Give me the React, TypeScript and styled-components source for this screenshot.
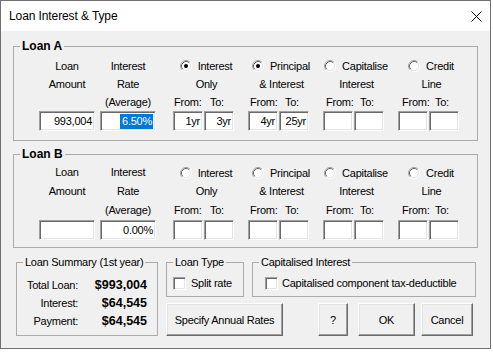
import React from 'react';
import styled, { createGlobalStyle } from 'styled-components';

const GlobalStyle = createGlobalStyle`
  html, body { margin: 0; padding: 0; background: #fff; }
  body {
    font-family: "Liberation Sans", Arial, sans-serif;
    font-size: 11px;
    letter-spacing: -0.25px;
    color: #000;
  }
`;

type TLoan = {
  name: string;
  amount: string;
  rate: string;
  rateSelected?: boolean;
  checked: number[];
  ranges: [string, string][];
  lh: number;
  pt: number;
  pb: number;
};

const TYPES = [
  { top: 'Interest', bottom: 'Only', ml: 17 },
  { top: 'Principal', bottom: '& Interest', ml: 14 },
  { top: 'Capitalise', bottom: 'Interest', ml: 14 },
  { top: 'Credit', bottom: 'Line', ml: 14 },
];

const LOANS: TLoan[] = [
  {
    name: 'Loan A',
    amount: '993,004',
    rate: '6.50%',
    rateSelected: true,
    checked: [0, 1],
    ranges: [['1yr', '3yr'], ['4yr', '25yr'], ['', ''], ['', '']],
    lh: 18,
    pt: 4,
    pb: 9,
  },
  {
    name: 'Loan B',
    amount: '',
    rate: '0.00%',
    checked: [],
    ranges: [['', ''], ['', ''], ['', ''], ['', '']],
    lh: 19,
    pt: 2,
    pb: 7,
  },
];

const Window = styled.div`
  width: 491px;
  height: 349px;
  box-sizing: border-box;
  border: 1px solid #707070;
  background: #f0f0f0;
  display: flex;
  flex-direction: column;
`;

const TitleBar = styled.div`
  height: 30px;
  flex: none;
  background: #fff;
  display: flex;
  align-items: center;
  justify-content: space-between;
  padding: 0 8px;
  font-size: 12px;
  letter-spacing: -0.1px;
`;

const Body = styled.div`
  padding: 8px 0 0 12px;
`;

const Group = styled.fieldset<{ $w: number; $mt?: number }>`
  margin: ${p => p.$mt || 0}px 0 0 0;
  padding: 0;
  min-width: 0;
  width: ${p => p.$w}px;
  box-sizing: border-box;
  border: 1px solid #aaa;
`;

const Legend = styled.legend<{ $bold?: boolean }>`
  padding: 0 2px;
  margin-left: 6px;
  line-height: 14px;
  font-size: ${p => (p.$bold ? 12 : 11)}px;
  font-weight: ${p => (p.$bold ? 700 : 400)};
  letter-spacing: ${p => (p.$bold ? '0' : '-0.25px')};
`;

const LoanRow = styled.div<{ $pt: number; $pb: number }>`
  display: flex;
  padding: ${p => p.$pt}px 0 ${p => p.$pb}px 25px;
`;

const Col = styled.div<{ $w: number; $ml: number }>`
  width: ${p => p.$w}px;
  margin-left: ${p => p.$ml}px;
  display: flex;
  flex-direction: column;
`;

const Line = styled.div<{ $lh: number; $shift?: number }>`
  height: ${p => p.$lh}px;
  line-height: ${p => p.$lh}px;
  text-align: center;
  white-space: nowrap;
  padding-left: ${p => p.$shift || 0}px;
`;

const RadioLine = styled.div<{ $lh: number }>`
  height: ${p => p.$lh}px;
  display: flex;
  align-items: center;
  justify-content: center;
  gap: 6px;
  padding-left: 5px;
  white-space: nowrap;
`;

const FromTo = styled.div<{ $lh: number }>`
  height: ${p => p.$lh}px;
  line-height: ${p => p.$lh}px;
  display: flex;
  gap: 1px;
  white-space: nowrap;
`;

const FromToCell = styled.span<{ $pl: number }>`
  width: 30px;
  padding-left: ${p => p.$pl}px;
  box-sizing: border-box;
`;

const Pair = styled.div`
  display: flex;
  gap: 1px;
`;

const Field = styled.div<{ $w: number }>`
  width: ${p => p.$w}px;
  height: 20px;
  box-sizing: border-box;
  background: #fff;
  border: 1px solid;
  border-color: #a0a0a0 #fff #fff #a0a0a0;
  box-shadow: inset 1px 1px #696969, inset -1px -1px #e3e3e3;
  display: flex;
  align-items: center;
  justify-content: flex-end;
  padding-right: 2px;
  white-space: nowrap;
`;

const Selected = styled.span`
  background: #0078d7;
  color: #fff;
  line-height: 15px;
  padding: 0 1px 0 2px;
`;

const Bottom = styled.div`
  display: flex;
  gap: 8px;
  margin: 7px 0 0 3px;
`;

const SummaryGrid = styled.div`
  display: grid;
  grid-template-columns: 61px 69px;
  grid-auto-rows: 18px;
  align-items: center;
  padding: 7px 0 3px 0;
`;

const SumLabel = styled.span`
  justify-self: end;
`;

const SumValue = styled.span`
  justify-self: end;
  font-weight: 700;
  font-size: 12.5px;
  letter-spacing: 0;
`;

const Right = styled.div`
  display: flex;
  flex-direction: column;
  gap: 6px;
`;

const TopRow = styled.div`
  display: flex;
  gap: 8px;
`;

const CheckRow = styled.label<{ $pl: number; $gap: number }>`
  display: flex;
  align-items: center;
  height: 18px;
  gap: ${p => p.$gap}px;
  padding: 5px 0 4px ${p => p.$pl}px;
`;

const CheckBox = styled.span`
  width: 13px;
  height: 13px;
  box-sizing: border-box;
  background: #fff;
  border: 1px solid;
  border-color: #a0a0a0 #fff #fff #a0a0a0;
  box-shadow: inset 1px 1px #696969, inset -1px -1px #e3e3e3;
  flex: none;
`;

const Buttons = styled.div`
  display: flex;
`;

const Button = styled.button<{ $w: number; $ml?: number }>`
  width: ${p => p.$w}px;
  height: 33px;
  margin-left: ${p => p.$ml || 0}px;
  padding: 0;
  box-sizing: border-box;
  font: inherit;
  letter-spacing: -0.25px;
  color: #000;
  background: #f0f0f0;
  border: 1px solid;
  border-color: #fff #696969 #696969 #fff;
  box-shadow: inset -1px -1px #a0a0a0, inset 1px 1px #e3e3e3;
  white-space: nowrap;
`;

const Radio: React.FC<{ checked?: boolean }> = ({ checked }) => (
  <svg width="12" height="12" viewBox="0 0 12 12" style={{ flex: 'none' }}>
    <circle cx="6" cy="6" r="4.5" fill="#fff" />
    <path d="M2.11 9.89 A5.5 5.5 0 0 1 9.89 2.11" fill="none" stroke="#a0a0a0" />
    <path d="M9.89 2.11 A5.5 5.5 0 0 1 2.11 9.89" fill="none" stroke="#fff" />
    <path d="M2.82 9.18 A4.5 4.5 0 0 1 9.18 2.82" fill="none" stroke="#696969" />
    <path d="M9.18 2.82 A4.5 4.5 0 0 1 2.82 9.18" fill="none" stroke="#e3e3e3" />
    {checked && <circle cx="6" cy="6" r="2" fill="#000" />}
  </svg>
);

const CloseIcon = () => (
  <svg width="11" height="11" viewBox="0 0 11 11">
    <path d="M0.5 0.5 L10.5 10.5 M10.5 0.5 L0.5 10.5" stroke="#000" strokeWidth="1" />
  </svg>
);

const LoanGroup: React.FC<{ loan: TLoan; mt?: number }> = ({ loan, mt }) => {
  const { lh } = loan;
  return (
    <Group $w={465} $mt={mt}>
      <Legend $bold>{loan.name}</Legend>
      <LoanRow $pt={loan.pt} $pb={loan.pb}>
        <Col $w={56} $ml={0}>
          <Line $lh={lh}>Loan</Line>
          <Line $lh={lh}>Amount</Line>
          <Line $lh={lh} />
          <Field $w={56}>{loan.amount}</Field>
        </Col>
        <Col $w={56} $ml={5}>
          <Line $lh={lh}>Interest</Line>
          <Line $lh={lh}>Rate</Line>
          <Line $lh={lh}>(Average)</Line>
          <Field $w={56}>
            {loan.rateSelected ? <Selected>{loan.rate}</Selected> : loan.rate}
          </Field>
        </Col>
        {TYPES.map((t, i) => (
          <Col key={t.top} $w={61} $ml={t.ml}>
            <RadioLine $lh={lh}>
              <Radio checked={loan.checked.includes(i)} />
              <span>{t.top}</span>
            </RadioLine>
            <Line $lh={lh} $shift={6}>{t.bottom}</Line>
            <FromTo $lh={lh}>
              <FromToCell $pl={1 + i}>From:</FromToCell>
              <FromToCell $pl={6}>To:</FromToCell>
            </FromTo>
            <Pair>
              <Field $w={30}>{loan.ranges[i][0]}</Field>
              <Field $w={30}>{loan.ranges[i][1]}</Field>
            </Pair>
          </Col>
        ))}
      </LoanRow>
    </Group>
  );
};

export default function App() {
  return (
    <>
      <GlobalStyle />
      <Window>
        <TitleBar>
          <span>Loan Interest &amp; Type</span>
          <CloseIcon />
        </TitleBar>
        <Body>
          <LoanGroup loan={LOANS[0]} />
          <LoanGroup loan={LOANS[1]} mt={6} />
          <Bottom>
            <Group $w={142}>
              <Legend>Loan Summary (1st year)</Legend>
              <SummaryGrid>
                <SumLabel>Total Loan:</SumLabel>
                <SumValue>$993,004</SumValue>
                <SumLabel>Interest:</SumLabel>
                <SumValue>$64,545</SumValue>
                <SumLabel>Payment:</SumLabel>
                <SumValue>$64,545</SumValue>
              </SummaryGrid>
            </Group>
            <Right>
              <TopRow>
                <Group $w={78}>
                  <Legend>Loan Type</Legend>
                  <CheckRow $pl={6} $gap={5}>
                    <CheckBox />
                    <span>Split rate</span>
                  </CheckRow>
                </Group>
                <Group $w={224}>
                  <Legend>Capitalised Interest</Legend>
                  <CheckRow $pl={12} $gap={4}>
                    <CheckBox />
                    <span>Capitalised component tax-deductible</span>
                  </CheckRow>
                </Group>
              </TopRow>
              <Buttons>
                <Button $w={117}>Specify Annual Rates</Button>
                <Button $w={30} $ml={35}>?</Button>
                <Button $w={57} $ml={10}>OK</Button>
                <Button $w={52} $ml={6}>Cancel</Button>
              </Buttons>
            </Right>
          </Bottom>
        </Body>
      </Window>
    </>
  );
}
